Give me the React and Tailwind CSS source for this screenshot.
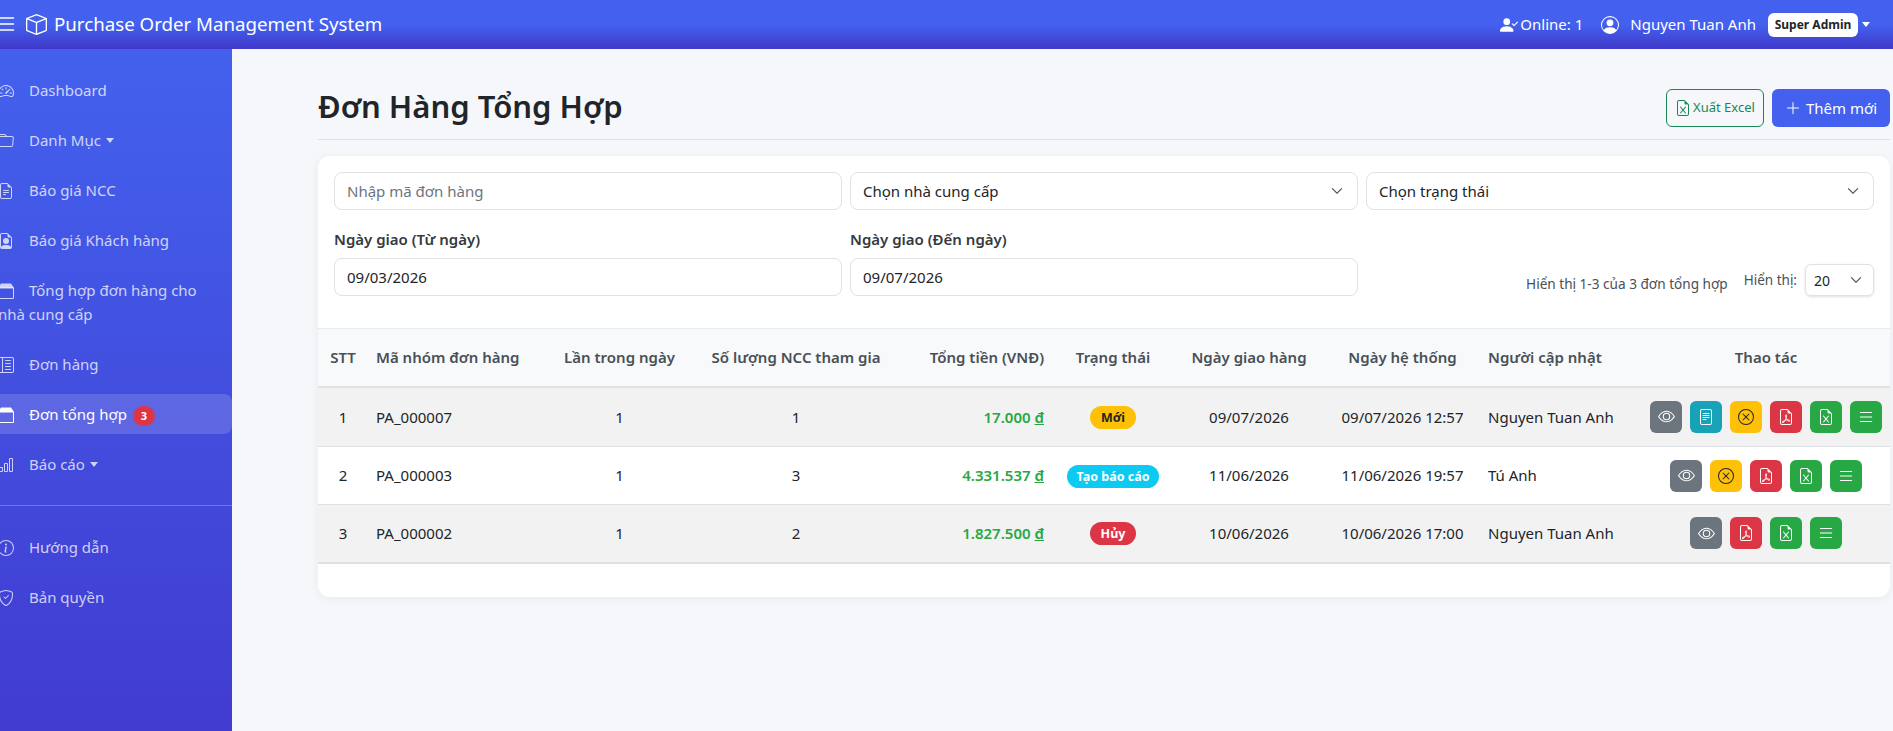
import {
  BsBarChart,
  BsBox,
  BsChevronDown,
  BsEye,
  BsFileEarmarkExcel,
  BsFileEarmarkPdf,
  BsFileEarmarkPerson,
  BsFileEarmarkText,
  BsFileText,
  BsFolder,
  BsInfoCircle,
  BsLayoutTextSidebarReverse,
  BsList,
  BsPersonCheckFill,
  BsPersonCircle,
  BsPlusLg,
  BsShieldCheck,
  BsSpeedometer2,
  BsXCircle,
} from "react-icons/bs";

const orders = [
  { stt: 1, code: "PA_000007", ncc: 1, total: "17.000", status: "Mới", statusClass: "bg-[#ffc107] text-[#212529] px-[11px]", ship: "09/07/2026", sys: "09/07/2026 12:57", user: "Nguyen Tuan Anh", actions: ["view", "doc", "cancel", "pdf", "excel", "list"], bg: "bg-[#f2f2f2]", h: "h-[60px]" },
  { stt: 2, code: "PA_000003", ncc: 3, total: "4.331.537", status: "Tạo báo cáo", statusClass: "bg-[#0dcaf0] text-white px-[10px]", ship: "11/06/2026", sys: "11/06/2026 19:57", user: "Tú Anh", actions: ["view", "cancel", "pdf", "excel", "list"], bg: "bg-white", h: "h-[58px]" },
  { stt: 3, code: "PA_000002", ncc: 2, total: "1.827.500", status: "Hủy", statusClass: "bg-[#dc3545] text-white px-[11px]", ship: "10/06/2026", sys: "10/06/2026 17:00", user: "Nguyen Tuan Anh", actions: ["view", "pdf", "excel", "list"], bg: "bg-[#f2f2f2]", h: "h-[58px]" },
];

const actionStyles = {
  view: { cls: "bg-[#6c757d] text-white", Icon: BsEye },
  doc: { cls: "bg-[#17a2b8] text-white", Icon: BsFileText },
  cancel: { cls: "bg-[#ffc107] text-[#212529]", Icon: BsXCircle },
  pdf: { cls: "bg-[#dc3545] text-white", Icon: BsFileEarmarkPdf },
  excel: { cls: "bg-[#28a745] text-white", Icon: BsFileEarmarkExcel },
  list: { cls: "bg-[#28a745] text-white", Icon: BsList },
};

// box icon used by the two "tong hop" menu entries
const TrayIcon = ({ className }) => (
  <svg viewBox="0 0 16 16" className={className} fill="currentColor">
    <path d="M3 .5h10l3 4.5H0z" />
    <path fillRule="evenodd" d="M0 4.5h16V15a1 1 0 0 1-1 1H1a1 1 0 0 1-1-1zM1 5.5V15h14V5.5z" />
  </svg>
);

const NavItem = ({ Icon, caret, active, badge, children }) => (
  <a className={`block min-h-10 w-[234px] py-2 pr-4 leading-6 rounded-r-lg ${active ? "bg-white/15 text-white" : "text-white/75"}`}>
    <Icon className="inline-block align-[-3px] w-4 h-4 mr-[15px]" />
    {children}
    {caret && <span className="inline-block align-[3px] ml-[5px] border-x-[4.5px] border-x-transparent border-t-[5px] border-t-white/75" />}
    {badge && <span className="inline-flex items-center justify-center align-middle -my-1 ml-[6px] w-[22px] h-5 rounded-full bg-[#dc3545] text-white text-[11px] leading-none font-bold">{badge}</span>}
  </a>
);

const Field = ({ children, className = "" }) => (
  <div className={`h-[38px] rounded-lg border border-[#dee2e6] bg-white px-3 flex items-center text-[#212529] ${className}`}>
    {children}
  </div>
);

const SelectBox = ({ label }) => (
  <Field className="justify-between">
    <span>{label}</span>
    <BsChevronDown className="w-3 h-3 text-[#343a40] mr-[2px]" strokeWidth={0.5} />
  </Field>
);

const Th = ({ className = "", children }) => (
  <th className={`font-semibold text-[#495057] px-2 ${className}`}>{children}</th>
);

export default function App() {
  return (
    <div className="h-[731px] w-[1893px] overflow-hidden flex flex-col bg-[#f5f7fb] text-[15px] text-[#212529] font-['Noto_Sans',sans-serif]">
      {/* top bar */}
      <header className="h-[49px] shrink-0 flex items-center justify-between text-white bg-gradient-to-b from-[#4361ee] from-50% to-[#3f37c9]">
        <div className="flex items-center">
          <BsList className="w-6 h-6 -ml-[6px] mr-2" />
          <BsBox className="w-[21px] h-[21px] mr-[7px]" />
          <span className="text-[18.7px]">Purchase Order Management System</span>
        </div>
        <div className="flex items-center pr-[23px]">
          <BsPersonCheckFill className="w-[18px] h-[18px] mr-[2px]" />
          <span>Online: 1</span>
          <BsPersonCircle className="w-[18px] h-[18px] ml-[18px] mr-[11px]" />
          <span>Nguyen Tuan Anh</span>
          <span className="ml-3 h-6 w-[90px] flex items-center justify-center rounded-md bg-white text-[#212529] text-[12px] font-bold">Super Admin</span>
          <span className="ml-1 border-x-[4.5px] border-x-transparent border-t-[5px] border-t-white" />
        </div>
      </header>

      <div className="flex flex-1 min-h-0">
        {/* sidebar */}
        <aside className="w-[232px] shrink-0 overflow-hidden bg-gradient-to-b from-[#4361ee] to-[#413bd0] pt-[21px]">
          <nav className="-ml-[2px] flex flex-col gap-[10px]">
            <NavItem Icon={BsSpeedometer2}>Dashboard</NavItem>
            <NavItem Icon={BsFolder} caret>Danh Mục</NavItem>
            <NavItem Icon={BsFileEarmarkText}>Báo giá NCC</NavItem>
            <NavItem Icon={BsFileEarmarkPerson}>Báo giá Khách hàng</NavItem>
            <NavItem Icon={TrayIcon}>Tổng hợp đơn hàng cho nhà cung cấp</NavItem>
            <NavItem Icon={BsLayoutTextSidebarReverse}>Đơn hàng</NavItem>
            <NavItem Icon={TrayIcon} active badge="3">Đơn tổng hợp</NavItem>
            <NavItem Icon={BsBarChart} caret>Báo cáo</NavItem>
            <hr className="my-[11px] border-white/25 ml-[2px]" />
            <NavItem Icon={BsInfoCircle}>Hướng dẫn</NavItem>
            <NavItem Icon={BsShieldCheck}>Bản quyền</NavItem>
          </nav>
        </aside>

        {/* main */}
        <main className="flex-1 min-w-0 pl-[86px] pr-[3px] pt-[40px]">
          <div className="h-[51px] flex items-start justify-between border-b border-[#dee2e6]">
            <h1 className="text-[31px] leading-[34px] font-semibold text-[#212529]">Đơn Hàng Tổng Hợp</h1>
            <div className="flex gap-2">
              <button className="h-[38px] w-[98px] flex items-center justify-center gap-[2px] rounded-md border border-[#198754] text-[#198754] text-[13px]">
                <BsFileEarmarkExcel className="w-4 h-4" />
                Xuất Excel
              </button>
              <button className="h-[38px] w-[118px] flex items-center justify-center gap-[5px] rounded-md bg-[#4361ee] text-white">
                <BsPlusLg className="w-4 h-4" />
                Thêm mới
              </button>
            </div>
          </div>

          <section className="mt-4 h-[441px] rounded-xl bg-white shadow-[0_2px_10px_rgba(0,0,0,0.06)] overflow-hidden">
            {/* filters */}
            <div className="h-[172px] px-4 pt-4">
              <div className="grid grid-cols-3 gap-x-2">
                <Field><span className="text-[#6c757d]">Nhập mã đơn hàng</span></Field>
                <SelectBox label="Chọn nhà cung cấp" />
                <SelectBox label="Chọn trạng thái" />
              </div>
              <div className="grid grid-cols-3 gap-x-2 mt-[17px]">
                <div>
                  <div className="font-semibold text-[#343a40] leading-[24px] mb-[7px]">Ngày giao (Từ ngày)</div>
                  <Field>09/03/2026</Field>
                </div>
                <div>
                  <div className="font-semibold text-[#343a40] leading-[24px] mb-[7px]">Ngày giao (Đến ngày)</div>
                  <Field>09/07/2026</Field>
                </div>
                <div className="flex items-end justify-end pt-[8px]">
                  <span className="text-[13.6px] text-[#495057] mb-[2px] mr-4">Hiển thị 1-3 của 3 đơn tổng hợp</span>
                  <span className="text-[13.5px] text-[#495057] mb-[6px] mr-2">Hiển thị:</span>
                  <div className="h-[32px] w-[69px] rounded-md border border-[#dee2e6] shadow-sm flex items-center justify-between pl-2 pr-[11px] text-[14px]">
                    20
                    <BsChevronDown className="w-3 h-3 text-[#343a40]" strokeWidth={0.5} />
                  </div>
                </div>
              </div>
            </div>

            {/* table */}
            <table className="w-full table-fixed border-collapse">
              <colgroup>
                <col className="w-[50px]" />
                <col className="w-[172px]" />
                <col className="w-[159px]" />
                <col className="w-[194px]" />
                <col className="w-[160px]" />
                <col className="w-[120px]" />
                <col className="w-[152px]" />
                <col className="w-[155px]" />
                <col className="w-[162px]" />
                <col />
              </colgroup>
              <thead>
                <tr className="h-[58px] bg-[#f8f9fa] border-t border-[#e9ecef] border-b-2 border-b-[#dee2e6]">
                  <Th className="text-center">STT</Th>
                  <Th className="text-left">Mã nhóm đơn hàng</Th>
                  <Th className="text-center">Lần trong ngày</Th>
                  <Th className="text-center">Số lượng NCC tham gia</Th>
                  <Th className="text-right pr-[9px]">Tổng tiền (VNĐ)</Th>
                  <Th className="text-center">Trạng thái</Th>
                  <Th className="text-center">Ngày giao hàng</Th>
                  <Th className="text-center">Ngày hệ thống</Th>
                  <Th className="text-left">Người cập nhật</Th>
                  <Th className="text-center">Thao tác</Th>
                </tr>
              </thead>
              <tbody>
                {orders.map((o) => (
                  <tr key={o.stt} className={`border-b border-[#dee2e6] last:border-b-2 ${o.h} ${o.bg}`}>
                    <td className="px-2 text-center">{o.stt}</td>
                    <td className="px-2">{o.code}</td>
                    <td className="px-2 text-center">1</td>
                    <td className="px-2 text-center">{o.ncc}</td>
                    <td className="pl-2 pr-[9px] text-right font-semibold text-[#28a745]">
                      {o.total} <span className="underline">đ</span>
                    </td>
                    <td className="px-1 text-center">
                      <span className={`inline-block rounded-full text-[12.5px] leading-[23px] font-bold ${o.statusClass}`}>{o.status}</span>
                    </td>
                    <td className="px-2 text-center">{o.ship}</td>
                    <td className="px-1 text-center">{o.sys}</td>
                    <td className="px-2">{o.user}</td>
                    <td className="px-2">
                      <div className="flex justify-center gap-2">
                        {o.actions.map((a) => {
                          const { cls, Icon } = actionStyles[a];
                          return (
                            <button key={a} className={`w-8 h-8 rounded-md flex items-center justify-center ${cls}`}>
                              <Icon className={a === "view" ? "w-[17px] h-[17px]" : a === "list" ? "w-[18px] h-[18px]" : "w-4 h-4"} />
                            </button>
                          );
                        })}
                      </div>
                    </td>
                  </tr>
                ))}
              </tbody>
            </table>
          </section>
        </main>
      </div>
    </div>
  );
}
